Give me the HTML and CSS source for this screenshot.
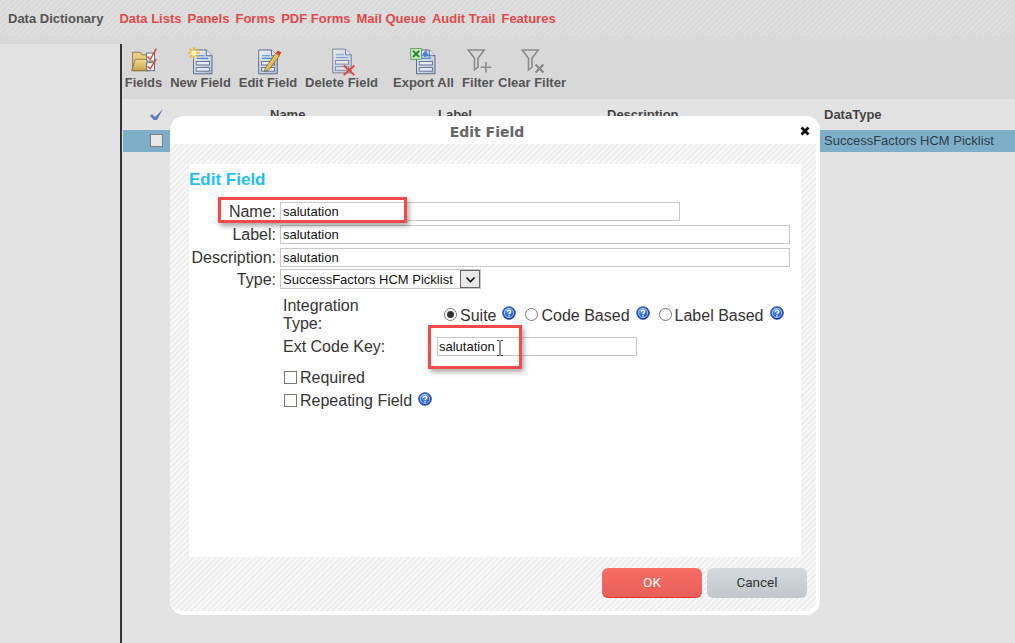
FILE: index.html
```html
<!DOCTYPE html>
<html lang="en">
<head>
<meta charset="utf-8">
<title>Edit Field</title>
<link rel="stylesheet" href="styles.css">
</head>
<body>
<svg class="defs" width="0" height="0" aria-hidden="true">
  <defs>
    <linearGradient id="paper" x1="0" y1="0" x2="1" y2="1"><stop offset="0" stop-color="#eef2f8"/><stop offset="1" stop-color="#b3bfd2"/></linearGradient>
    <linearGradient id="folder" x1="0" y1="0" x2="0" y2="1"><stop offset="0" stop-color="#f0dc95"/><stop offset="1" stop-color="#c9a24a"/></linearGradient>
    <radialGradient id="help" cx=".4" cy=".3" r=".8"><stop offset="0" stop-color="#5f9cf5"/><stop offset="1" stop-color="#0b3fb0"/></radialGradient>
    <symbol id="doc" viewBox="0 0 24 30">
      <path d="M1.5 1.5H16L22.5 8V28.5H1.5Z" fill="url(#paper)" stroke="#4f5f80"/>
      <path d="M16 1.5V8H22.5" fill="#dfe6f0" stroke="#4f5f80"/>
      <path d="M5 8H14M5 11H18" stroke="#4f8ad0" stroke-width="1.2"/>
      <rect x="4.5" y="14.5" width="15" height="4" fill="#e8edf5" stroke="#56688a"/>
      <rect x="4.5" y="21.5" width="15" height="4" fill="#e8edf5" stroke="#56688a"/>
    </symbol>
    <symbol id="q" viewBox="0 0 14 14">
      <circle cx="7" cy="7" r="6.3" fill="url(#help)" stroke="#0b2f85" stroke-width=".8"/>
      <circle cx="7" cy="7" r="4.6" fill="none" stroke="#cfe2ff" stroke-width=".7"/>
      <path d="M5.3 5.6C5.4 3.8 8.8 3.8 8.8 5.6 8.8 6.9 7 6.9 7 8.3" fill="none" stroke="#fff" stroke-width="1.3"/>
      <rect x="6.3" y="9.2" width="1.4" height="1.4" fill="#fff"/>
    </symbol>
  </defs>
</svg>

<header class="topbar">
  <span class="brand">Data Dictionary</span>
  <nav class="topnav">
    <a>Data Lists</a><a>Panels</a><a>Forms</a><a>PDF Forms</a><a>Mail Queue</a><a>Audit Trail</a><a>Features</a>
  </nav>
</header>
<div class="strip"></div>

<div class="layout">
  <aside class="sidebar"></aside>
  <main class="main">
    <div class="toolbar">
      <div class="tool tool-fields">
        <svg class="ticon" width="30" height="30" viewBox="0 0 34 34">
          <path d="M4 7H13L15 10H23V28H4Z" fill="#e6cf85" stroke="#8a7440"/>
          <path d="M3 28L7 15H27L23 28Z" fill="url(#folder)" stroke="#8a7440"/>
          <rect x="20" y="8" width="9" height="9" fill="#fff" stroke="#55627a"/>
          <rect x="20" y="19" width="9" height="9" fill="#fff" stroke="#55627a"/>
          <path d="M21 12L24 15 31 3M21 23L24 26 31 15" fill="none" stroke="#e0402e" stroke-width="1.6"/>
        </svg>
        <span>Fields</span>
      </div>
      <div class="tool tool-new">
        <svg class="ticon" width="30" height="30" viewBox="0 0 34 34">
          <use href="#doc" x="7" y="3" width="24" height="30"/>
          <path d="M9 1V15M2 8H16M4 3L14 13M14 3L4 13" stroke="#f2b632" stroke-width="1.7"/>
          <circle cx="9" cy="8" r="3" fill="#fff2b8"/>
        </svg>
        <span>New Field</span>
      </div>
      <div class="tool tool-edit">
        <svg class="ticon" width="30" height="30" viewBox="0 0 34 34">
          <use href="#doc" x="5" y="3" width="24" height="30"/>
          <path d="M14 25L26 8 30 11 18 27 13 29Z" fill="#e8c050" stroke="#6a5a30" stroke-width=".8"/>
          <path d="M26 8L28 5 32 7 30 11Z" fill="#d8402e"/>
        </svg>
        <span>Edit Field</span>
      </div>
      <div class="tool tool-delete">
        <svg class="ticon" width="30" height="30" viewBox="0 0 34 34">
          <use href="#doc" x="5" y="2" width="24" height="30" opacity=".75"/>
          <path d="M19 22L31 33M31 22L19 33" stroke="#e0483a" stroke-width="2.2"/>
        </svg>
        <span>Delete Field</span>
      </div>
      <div class="tool tool-export">
        <svg class="ticon" width="30" height="30" viewBox="0 0 34 34">
          <use href="#doc" x="7" y="3" width="24" height="30"/>
          <rect x="2" y="3" width="12" height="12" fill="#d8ecd4" stroke="#4c9a4c"/>
          <path d="M4.5 5.5L11.5 12.5M11.5 5.5L4.5 12.5" stroke="#2d8a32" stroke-width="2.4"/>
          <path d="M15 9L20 4 20 7 25 14 20 11 18 13Z" fill="#4f7fd0"/>
        </svg>
        <span>Export All</span>
      </div>
      <div class="tool tool-filter">
        <svg class="ticon" width="30" height="30" viewBox="0 0 34 34">
          <path d="M6 4.5H24L17 14V24L13 27V14Z" fill="none" stroke="#8a8a8a" stroke-width="1.8"/>
          <path d="M26 18V30M20 24H32" stroke="#8a8a8a" stroke-width="1.8"/>
        </svg>
        <span>Filter</span>
      </div>
      <div class="tool tool-clear">
        <svg class="ticon" width="30" height="30" viewBox="0 0 34 34">
          <path d="M6 4.5H24L17 14V24L13 27V14Z" fill="none" stroke="#8a8a8a" stroke-width="1.8"/>
          <path d="M21 21L30 30M30 21L21 30" stroke="#8a8a8a" stroke-width="2.6"/>
        </svg>
        <span>Clear Filter</span>
      </div>
    </div>
    <div class="table-head">
      <span class="col col-check">
        <svg width="16" height="14" viewBox="0 0 16 14"><path d="M1 8L3 6 6 9 14 1 8 12H5Z" fill="#5a7cc0"/></svg>
      </span>
      <span class="col col-name">Name</span>
      <span class="col col-label">Label</span>
      <span class="col col-desc">Description</span>
      <span class="col col-type">DataType</span>
    </div>
    <div class="table-row">
      <span class="col col-check"><i class="row-box"></i></span>
      <span class="col col-name"></span>
      <span class="col col-label"></span>
      <span class="col col-desc"></span>
      <span class="col col-type">SuccessFactors HCM Picklist</span>
    </div>
  </main>
</div>

<section class="modal">
  <div class="modal-title">
    <span>Edit Field</span>
    <svg class="close" width="10" height="10" viewBox="0 0 10 10"><path d="M1.5 1.5L8.5 8.5M8.5 1.5L1.5 8.5" stroke="#111" stroke-width="2.8"/></svg>
  </div>
  <div class="modal-body">
    <div class="panel">
      <h2 class="panel-title">Edit Field</h2>
      <form class="form">
        <div class="frow"><label>Name:</label><input class="inp inp-name" value="salutation"></div>
        <div class="frow"><label>Label:</label><input class="inp inp-wide" value="salutation"></div>
        <div class="frow"><label>Description:</label><input class="inp inp-wide" value="salutation"></div>
        <div class="frow frow-type"><label>Type:</label>
          <div class="fake-select"><span>SuccessFactors HCM Picklist</span>
            <i class="arrow"><svg width="11" height="7" viewBox="0 0 11 7"><path d="M1.5 1.5L5.5 5.5 9.5 1.5" fill="none" stroke="#111" stroke-width="1.6"/></svg></i>
          </div>
        </div>
        <div class="sub">
          <div class="integ">
            <div class="integ-label">Integration Type:</div>
            <div class="radios">
              <span class="radio on"></span><span class="rtext">Suite</span><svg class="qm" width="14" height="14"><use href="#q"/></svg>
              <span class="radio r2"></span><span class="rtext">Code Based</span><svg class="qm" width="14" height="14"><use href="#q"/></svg>
              <span class="radio r2"></span><span class="rtext">Label Based</span><svg class="qm" width="14" height="14"><use href="#q"/></svg>
            </div>
          </div>
          <div class="ext">
            <span class="ext-label">Ext Code Key:</span>
            <input class="inp inp-ext" value="salutation">
          </div>
          <div class="check check-1"><span class="cbox"></span><span>Required</span></div>
          <div class="check"><span class="cbox"></span><span>Repeating Field</span><svg class="qm" width="14" height="14"><use href="#q"/></svg></div>
        </div>
      </form>
    </div>
    <div class="actions">
      <button type="button" class="btn btn-ok">OK</button>
      <button type="button" class="btn btn-cancel">Cancel</button>
    </div>
  </div>
</section>

<div class="callout callout-name"></div>
<div class="callout callout-ext"></div>
<svg class="ibeam" width="8" height="16" viewBox="0 0 8 16"><path d="M1 .5H3L4 1.5 5 .5H7M4 1.5V14.5M1 15.5H3L4 14.5 5 15.5H7" fill="none" stroke="#222"/></svg>
</body>
</html>
```
FILE: styles.css
```css
* { box-sizing: border-box; }
html, body { margin: 0; height: 643px; overflow: hidden; }
body {
  background: #e3e3e3;
  font-family: "Liberation Sans", Arial, sans-serif;
  color: #333;
  position: relative;
}
.defs { position: absolute; }

.topbar {
  height: 36px;
  padding-left: 8px;
  display: flex;
  align-items: center;
  gap: 16px;
  font-size: 13px;
  font-weight: bold;
  background: repeating-linear-gradient(135deg, #d9d9d9 0 2px, #dedede 2px 4px);
}
.strip { height: 8px; background: #d9d9d9; }
.brand { color: #555; }
.topnav { display: flex; gap: 6px; }
.topnav a { color: #e04a4a; }

.layout { display: flex; height: 599px; }
.sidebar { width: 120px; flex: none; }
.main { flex: 1; border-left: 2px solid #333; min-width: 0; }

.toolbar {
  height: 55px;
  background: #d8d8d8;
  display: flex;
  font-size: 13px;
  font-weight: bold;
  color: #555;
}
.tool { display: flex; flex-direction: column; align-items: center; white-space: nowrap; padding-top: 2px; }
.tool span { line-height: 16px; margin-top: -1px; }
.ticon { display: block; }
.tool-fields { margin-left: 3px; width: 37px; }
.tool-new { margin-left: 8px; width: 61px; }
.tool-edit { margin-left: 8px; width: 58px; }
.tool-delete { margin-left: 8px; width: 73px; }
.tool-export { margin-left: 15px; width: 61px; }
.tool-filter { margin-left: 8px; width: 32px; }
.tool-clear { margin-left: 4px; width: 68px; }

.table-head, .table-row { display: flex; align-items: center; font-size: 13px; }
.table-head { height: 31px; font-weight: bold; color: #444; }
.table-row { height: 22px; margin-left: 1px; padding-bottom: 1px; background: #7fafc8; color: #2c3e4a; }
.col { display: block; white-space: nowrap; }
.col-check { width: 66px; padding-left: 27px; }
.table-row .col-check { width: 65px; }
.col-check svg { display: block; }
.col-name { width: 250px; padding-left: 82px; }
.col-label { width: 169px; }
.col-desc { width: 217px; }
.col-type { flex: 1; }
.row-box { display: block; width: 13px; height: 13px; background: #e6e6e6; border: 1px solid #808080; }

.modal {
  position: absolute;
  left: 170px;
  top: 116px;
  width: 650px;
  height: 499px;
  background: #fff;
  border-radius: 14px;
  padding: 0 4px 4px 0;
  display: flex;
  flex-direction: column;
}
.modal-title {
  height: 28px;
  flex: none;
  position: relative;
  display: flex;
  align-items: center;
  justify-content: center;
  font-family: "DejaVu Sans", sans-serif;
  font-size: 14px;
  font-weight: bold;
  color: #666;
  padding: 3px 12px 0 0;
}
.close { position: absolute; right: 6px; top: 10px; }
.modal-body {
  flex: 1;
  padding: 20px 9px 0 19px;
  background: repeating-linear-gradient(135deg, #eee 0 2px, #f8f8f8 2px 4px);
  border-radius: 0 0 10px 10px;
  display: flex;
  flex-direction: column;
}
.panel { width: 612px; height: 393px; background: #fff; flex: none; }
.panel-title {
  margin: 0;
  padding-top: 7px;
  color: #1fc1f0;
  font-size: 17px;
  line-height: 18px;
  font-weight: bold;
}
.form { margin: 0; padding-top: 13px; font-size: 16px; color: #333; }
.frow { display: flex; align-items: center; height: 19px; margin-bottom: 4px; }
.frow label { width: 87px; text-align: right; margin-right: 4px; line-height: 19px; white-space: nowrap; color: #333; }
.inp {
  height: 19px;
  border: 1px solid #c8c8c8;
  background: #fff;
  padding: 0 2px;
  font: 13px "Liberation Sans", Arial, sans-serif;
  color: #111;
  outline: none;
}
.inp-name { width: 400px; }
.inp-wide { width: 510px; }
.frow-type { height: 20px; margin-bottom: 1px; margin-top: -2px; }
.fake-select {
  width: 201px;
  height: 20px;
  border: 1px solid #c8c8c8;
  display: flex;
  align-items: center;
  justify-content: space-between;
  font-size: 13px;
  padding-left: 2px;
  color: #111;
}
.arrow {
  width: 20px;
  height: 18px;
  display: flex;
  align-items: center;
  justify-content: center;
  background: #e9e9e9;
  border: 1px solid #666;
}
.sub { margin-left: 94px; padding-top: 6px; }
.integ { display: flex; height: 47px; }
.integ-label { width: 100px; padding-top: 1px; line-height: 18px; }
.radios { display: flex; align-items: flex-start; margin-left: 61px; padding-top: 11px; line-height: 18px; }
.radio {
  width: 13px; height: 13px; border-radius: 50%;
  border: 1px solid #777; background: #fff; margin: 1px 3px 0 0; flex: none;
  position: relative;
}
.radio.on::after {
  content: ""; position: absolute; left: 2px; top: 2px; width: 7px; height: 7px;
  border-radius: 50%; background: #333;
}
.radio.r2 { margin-left: 9px; }
.rtext { white-space: nowrap; }
.qm { flex: none; margin-left: 6px; display: block; }
.radios .qm { margin-top: -1px; }
.ext { display: flex; align-items: center; height: 19px; margin-top: -6px; }
.ext-label { width: 154px; }
.inp-ext { width: 200px; padding-left: 1px; }
.check { display: flex; align-items: center; height: 23px; gap: 3px; margin-left: 1px; }
.check-1 { margin-top: 10px; }
.check .qm { margin-left: 3px; margin-top: -3px; }
.cbox { width: 13px; height: 13px; border: 1px solid #777; background: #fff; flex: none; }

.actions { display: flex; justify-content: flex-end; gap: 5px; padding-top: 11px; }
.btn {
  width: 100px;
  height: 30px;
  border: 0;
  border-radius: 6px;
  font: 13.5px Roboto, "Liberation Sans", sans-serif;
  padding: 0 0 2px;
}
.btn-ok { background: linear-gradient(#f96e66, #e65f58); color: #fff; border-bottom: 1px solid #e03020; }
.btn-cancel { background: linear-gradient(#d5dade, #c2c7cc); color: #333; }

.callout {
  position: absolute;
  border: 3px solid #f64a4a;
  box-shadow: 2px 3px 5px rgba(0, 0, 0, .35);
}
.callout-name { left: 218px; top: 197px; width: 189px; height: 26px; }
.callout-ext { left: 428px; top: 325px; width: 94px; height: 44px; }
.ibeam { position: absolute; left: 496px; top: 340px; }
```
